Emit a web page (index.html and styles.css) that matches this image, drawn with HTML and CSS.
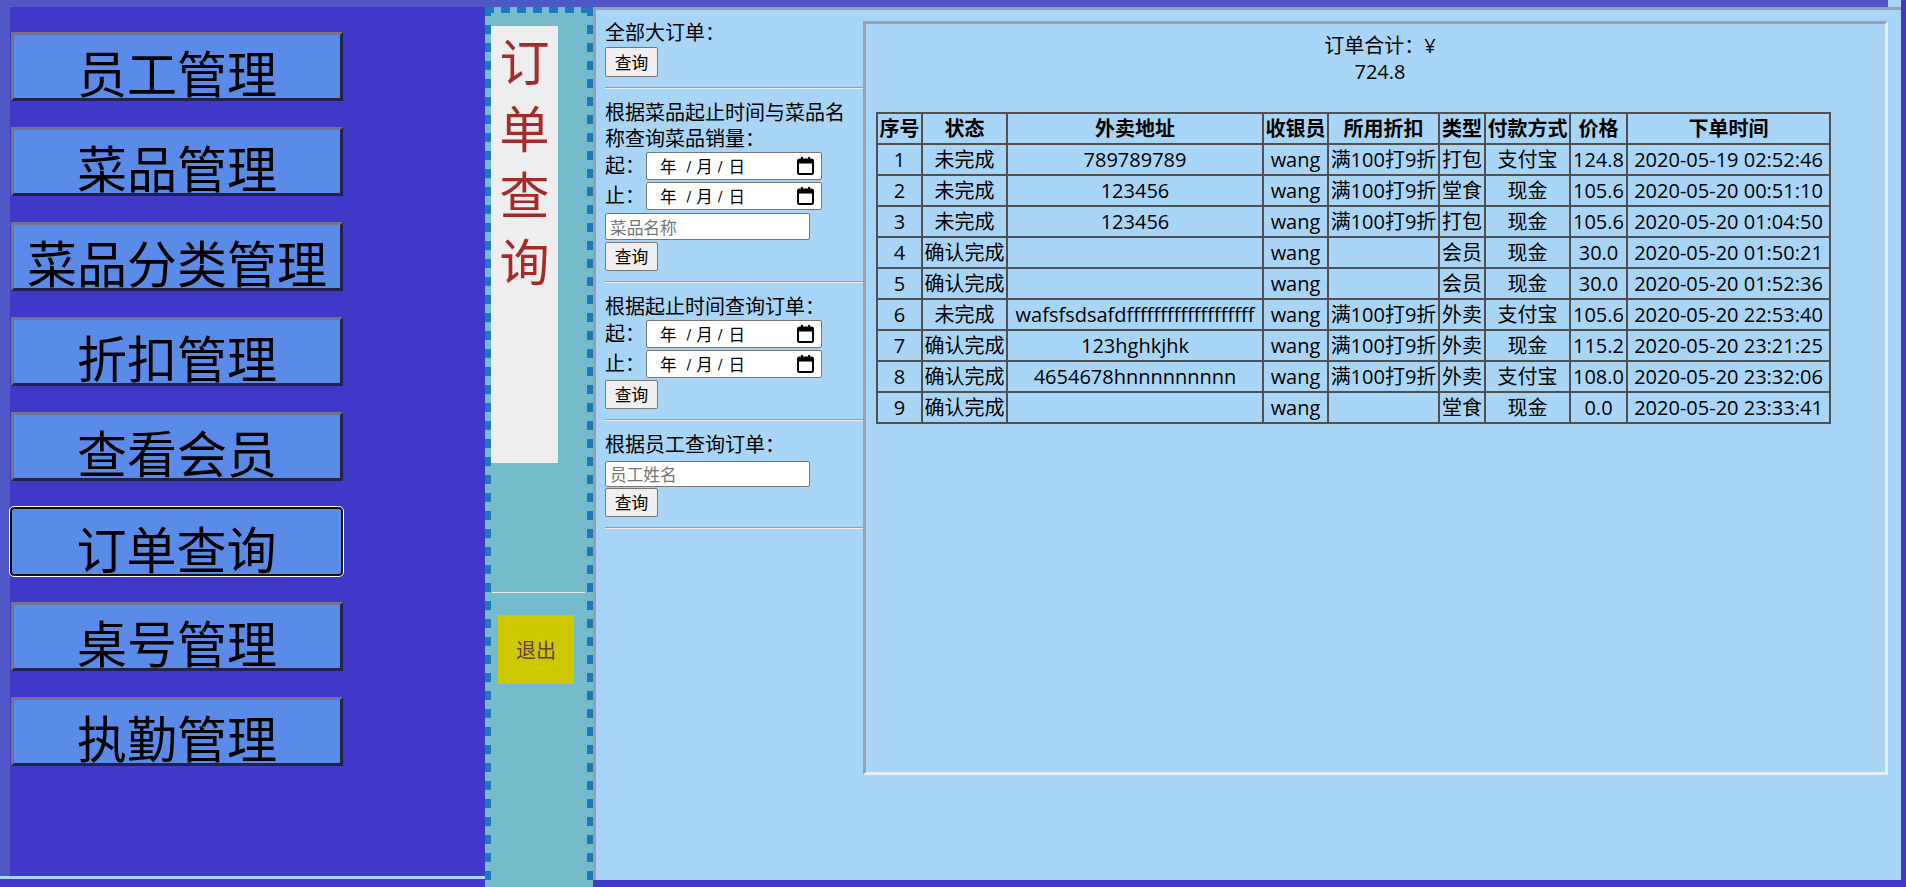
FILE: index.html
```html
<!DOCTYPE html>
<html lang="zh-CN">
<head>
<meta charset="utf-8">
<title>订单查询</title>
<link rel="stylesheet" href="styles.css">
</head>
<body>
<div class="screen">
  <div class="topband"></div>
  <div class="frames">
    <div class="leftwrap">
      <div class="strip"></div>
      <nav class="menu">
        <button class="menu-btn">员工管理</button>
        <button class="menu-btn">菜品管理</button>
        <button class="menu-btn">菜品分类管理</button>
        <button class="menu-btn">折扣管理</button>
        <button class="menu-btn">查看会员</button>
        <button class="menu-btn active">订单查询</button>
        <button class="menu-btn">桌号管理</button>
        <button class="menu-btn">执勤管理</button>
      </nav>
    </div>

    <aside class="mid">
      <div class="mid-top">
        <div class="page-title">订单查询</div>
      </div>
      <div class="mid-divider"></div>
      <div class="mid-bottom">
        <button class="exit-btn">退出</button>
      </div>
    </aside>

    <main class="content">
      <div class="query">
        <div class="label">全部大订单：</div>
        <button class="q-btn b1">查询</button>
        <hr class="sep">

        <div class="label">根据菜品起止时间与菜品名称查询菜品销量：</div>
        <div class="date-row">
          <span class="date-label">起：</span>
          <span class="date-box"><span class="dy">年</span><span class="ds1">/</span><span class="dm">月</span><span class="ds2">/</span><span class="dd">日</span>
            <svg class="cal" width="17" height="18" viewBox="0 0 17 18"><rect x="1" y="2.5" width="15" height="14.5" rx="1.5" fill="none" stroke="#000" stroke-width="2"/><rect x="1" y="2.5" width="15" height="4" fill="#000"/><rect x="4" y="0" width="2" height="3" fill="#000"/><rect x="11" y="0" width="2" height="3" fill="#000"/></svg>
          </span>
        </div>
        <div class="date-row">
          <span class="date-label">止：</span>
          <span class="date-box"><span class="dy">年</span><span class="ds1">/</span><span class="dm">月</span><span class="ds2">/</span><span class="dd">日</span>
            <svg class="cal" width="17" height="18" viewBox="0 0 17 18"><rect x="1" y="2.5" width="15" height="14.5" rx="1.5" fill="none" stroke="#000" stroke-width="2"/><rect x="1" y="2.5" width="15" height="4" fill="#000"/><rect x="4" y="0" width="2" height="3" fill="#000"/><rect x="11" y="0" width="2" height="3" fill="#000"/></svg>
          </span>
        </div>
        <input class="q-input i1" type="text" placeholder="菜品名称">
        <button class="q-btn b2">查询</button>
        <hr class="sep">

        <div class="label">根据起止时间查询订单：</div>
        <div class="date-row">
          <span class="date-label">起：</span>
          <span class="date-box"><span class="dy">年</span><span class="ds1">/</span><span class="dm">月</span><span class="ds2">/</span><span class="dd">日</span>
            <svg class="cal" width="17" height="18" viewBox="0 0 17 18"><rect x="1" y="2.5" width="15" height="14.5" rx="1.5" fill="none" stroke="#000" stroke-width="2"/><rect x="1" y="2.5" width="15" height="4" fill="#000"/><rect x="4" y="0" width="2" height="3" fill="#000"/><rect x="11" y="0" width="2" height="3" fill="#000"/></svg>
          </span>
        </div>
        <div class="date-row">
          <span class="date-label">止：</span>
          <span class="date-box"><span class="dy">年</span><span class="ds1">/</span><span class="dm">月</span><span class="ds2">/</span><span class="dd">日</span>
            <svg class="cal" width="17" height="18" viewBox="0 0 17 18"><rect x="1" y="2.5" width="15" height="14.5" rx="1.5" fill="none" stroke="#000" stroke-width="2"/><rect x="1" y="2.5" width="15" height="4" fill="#000"/><rect x="4" y="0" width="2" height="3" fill="#000"/><rect x="11" y="0" width="2" height="3" fill="#000"/></svg>
          </span>
        </div>
        <button class="q-btn b3">查询</button>
        <hr class="sep">

        <div class="label">根据员工查询订单：</div>
        <input class="q-input i2" type="text" placeholder="员工姓名">
        <button class="q-btn b4">查询</button>
        <hr class="sep">
      </div>

      <section class="result">
        <div class="total">
          <div>订单合计：¥</div>
          <div class="total-num">724.8</div>
        </div>
        <table class="orders">
          <colgroup>
            <col class="c1"><col class="c2"><col class="c3"><col class="c4"><col class="c5"><col class="c6"><col class="c7"><col class="c8"><col class="c9">
          </colgroup>
          <thead>
            <tr><th>序号</th><th>状态</th><th>外卖地址</th><th>收银员</th><th>所用折扣</th><th>类型</th><th>付款方式</th><th>价格</th><th>下单时间</th></tr>
          </thead>
          <tbody>
            <tr><td>1</td><td>未完成</td><td>789789789</td><td>wang</td><td>满100打9折</td><td>打包</td><td>支付宝</td><td>124.8</td><td>2020-05-19 02:52:46</td></tr>
            <tr><td>2</td><td>未完成</td><td>123456</td><td>wang</td><td>满100打9折</td><td>堂食</td><td>现金</td><td>105.6</td><td>2020-05-20 00:51:10</td></tr>
            <tr><td>3</td><td>未完成</td><td>123456</td><td>wang</td><td>满100打9折</td><td>打包</td><td>现金</td><td>105.6</td><td>2020-05-20 01:04:50</td></tr>
            <tr><td>4</td><td>确认完成</td><td></td><td>wang</td><td></td><td>会员</td><td>现金</td><td>30.0</td><td>2020-05-20 01:50:21</td></tr>
            <tr><td>5</td><td>确认完成</td><td></td><td>wang</td><td></td><td>会员</td><td>现金</td><td>30.0</td><td>2020-05-20 01:52:36</td></tr>
            <tr><td>6</td><td>未完成</td><td>wafsfsdsafdfffffffffffffffffff</td><td>wang</td><td>满100打9折</td><td>外卖</td><td>支付宝</td><td>105.6</td><td>2020-05-20 22:53:40</td></tr>
            <tr><td>7</td><td>确认完成</td><td>123hghkjhk</td><td>wang</td><td>满100打9折</td><td>外卖</td><td>现金</td><td>115.2</td><td>2020-05-20 23:21:25</td></tr>
            <tr><td>8</td><td>确认完成</td><td>4654678hnnnnnnnnn</td><td>wang</td><td>满100打9折</td><td>外卖</td><td>支付宝</td><td>108.0</td><td>2020-05-20 23:32:06</td></tr>
            <tr><td>9</td><td>确认完成</td><td></td><td>wang</td><td></td><td>堂食</td><td>现金</td><td>0.0</td><td>2020-05-20 23:33:41</td></tr>
          </tbody>
        </table>
      </section>
    </main>
  </div>
</div>
</body>
</html>
```

FILE: styles.css
```css
html, body {
  margin: 0;
  padding: 0;
  overflow: hidden;
}

body {
  background: #4038c8;
  font-family: "Open Sans", "Noto Sans CJK SC", sans-serif;
  color: #000;
}

.screen {
  width: 1906px;
  height: 887px;
}

.topband {
  height: 7px;
  background: linear-gradient(to right, #5058c8 0 1888px, #a8d5f5 1888px 1901px, #4038c8 1901px);
}

.frames {
  display: flex;
  height: 873px;
  align-items: flex-start;
}

/* ---------- left menu ---------- */
.leftwrap {
  flex: none;
  display: flex;
  width: 485px;
  height: 872px;
  box-sizing: border-box;
  border-bottom: 3px solid #a8d5f5;
}

.strip {
  width: 10px;
  background: #5058c8;
}

.menu {
  flex: 1;
  display: flex;
  flex-direction: column;
  align-items: flex-start;
  gap: 26px;
  padding: 25px 0 0 1px;
  background: #4038c8;
}

.menu-btn {
  width: 332px;
  height: 69px;
  box-sizing: border-box;
  border: 3px solid;
  border-color: #72748e #22234a #22234a #72748e;
  background: #5b8be9;
  color: #000;
  font-family: "Noto Sans CJK SC", sans-serif;
  font-size: 50px;
  line-height: 53px;
  padding: 10px 0 0;
  margin: 0;
  text-align: center;
  white-space: nowrap;
  overflow: visible;
}

.menu-btn.active {
  border: 2px solid #111;
  border-radius: 4px;
  outline: 1px solid #fff;
  margin-left: -1px;
  width: 333px;
  padding-top: 11px;
}

/* ---------- middle column ---------- */
.mid {
  flex: none;
  width: 108px;
  height: 886px;
  box-sizing: border-box;
  padding: 6px 6px 0;
  background:
    repeating-linear-gradient(to bottom, #1b7abe 0 9px, transparent 9px 18px) left top / 6px 100% no-repeat,
    repeating-linear-gradient(to bottom, #1b7abe 0 9px, transparent 9px 18px) right top / 6px 100% no-repeat,
    repeating-linear-gradient(to right, #1b7abe 0 9px, transparent 9px 16px) left top / 100% 6px no-repeat,
    #74bccb;
}

.mid-top {
  height: 579px;
  padding-top: 13px;
  box-sizing: border-box;
}

.page-title {
  width: 67px;
  height: 437px;
  background: #eeeeee;
  color: #a52a2a;
  font-family: "Noto Sans CJK SC", sans-serif;
  font-size: 50px;
  line-height: 66.5px;
  text-align: center;
}

.mid-divider {
  height: 1px;
  margin: 0 2px 0 1px;
  background: #e4eef0;
}

.mid-bottom {
  padding: 22px 0 0 7px;
}

.exit-btn {
  width: 76px;
  height: 69px;
  border: none;
  background: #cdc800;
  color: #6d3b4a;
  font-family: "Noto Sans CJK SC", sans-serif;
  font-size: 20px;
  padding: 0;
  margin: 0;
}

/* ---------- content frame ---------- */
.content {
  flex: none;
  display: flex;
  align-items: flex-start;
  width: 1308px;
  height: 873px;
  box-sizing: border-box;
  border-left: 3px solid #9aa0a8;
  border-top: 3px solid #9aa0a8;
  background: #a8d5f5;
  padding: 10px 0 0 9px;
}

.query {
  flex: none;
  width: 258px;
}

.label {
  font-size: 20px;
  line-height: 26px;
}

.q-btn {
  display: block;
  width: 53px;
  height: 29px;
  box-sizing: border-box;
  border: 1px solid #767676;
  border-radius: 2px;
  background: #efefef;
  color: #000;
  font-family: "Noto Sans CJK SC", sans-serif;
  font-size: 16.7px;
  line-height: 27px;
  padding: 0;
  margin: 0;
}

.b1 { margin-top: 1px; height: 30px; }
.b2 { margin-top: 2px; }
.b3 { margin-top: 0; }
.b4 { margin-top: 1px; }

.sep {
  height: 0;
  margin: 10px 0 11px;
  border: none;
  border-top: 1px solid #9a9a9a;
  border-bottom: 1px solid #eeeeee;
}

.date-row {
  display: flex;
  align-items: flex-start;
  height: 30px;
}

.date-label {
  width: 41px;
  font-size: 20px;
  line-height: 28px;
}

.date-box {
  display: flex;
  align-items: center;
  width: 176px;
  height: 28px;
  box-sizing: border-box;
  border: 1px solid #767676;
  border-radius: 2px;
  background: #fff;
  font-family: "Noto Sans CJK SC", sans-serif;
  font-size: 16.5px;
  line-height: 26px;
  padding-left: 13px;
}

.ds1 { margin: 0 5px 0 10px; font-family: "DejaVu Sans", sans-serif; font-size: 14px; }
.ds2 { margin: 0 6px 0 5px; font-family: "DejaVu Sans", sans-serif; font-size: 14px; }

.cal {
  margin-left: auto;
  margin-right: 7px;
}

.q-input {
  display: block;
  width: 205px;
  height: 27px;
  box-sizing: border-box;
  border: 1px solid #767676;
  border-radius: 2px;
  background: #fff;
  font-family: "Noto Sans CJK SC", sans-serif;
  font-size: 16.7px;
  padding: 0 4px;
  margin: 0;
}

.q-input::placeholder {
  color: #757575;
}

.i1 { margin-top: 1px; }
.i2 { margin-top: 3px; height: 26px; }

/* ---------- result box ---------- */
.result {
  flex: none;
  width: 1025px;
  height: 754px;
  margin-top: 1px;
  box-sizing: border-box;
  border: 3px solid;
  border-color: #9aa0a8 #e6eef6 #e6eef6 #9aa0a8;
  padding: 9px 10px;
}

.total {
  font-size: 20px;
  line-height: 26px;
  text-align: center;
  padding-left: 9px;
}

.orders {
  margin-top: 27px;
  width: 955px;
  table-layout: fixed;
  border-collapse: separate;
  border-spacing: 0;
  border: 1px solid #505050;
  font-size: 20px;
}

.orders th,
.orders td {
  border: 1px solid #505050;
  padding: 1px 0;
  line-height: 27px;
  text-align: center;
  white-space: nowrap;
  overflow: hidden;
}

.orders th {
  font-weight: bold;
}

.c1 { width: 45px; }
.c2 { width: 85px; }
.c3 { width: 256px; }
.c4 { width: 65px; }
.c5 { width: 111px; }
.c6 { width: 46px; }
.c7 { width: 85px; }
.c8 { width: 57px; }
.c9 { width: 203px; }
```
